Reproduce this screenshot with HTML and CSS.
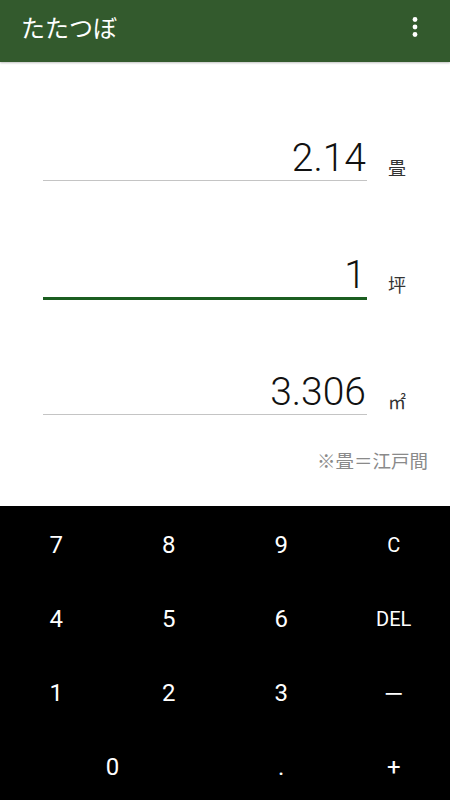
FILE: index.html
```html
<!DOCTYPE html>
<html lang="ja">
    <head>
    <meta charset="utf-8">
    <title>たたつぼ</title>
    <link rel="stylesheet" href="styles.css">
    </head>
    <body>
        <header class="toolbar">
            <h1 class="title">たたつぼ</h1>
            <svg class="menu" width="24" height="24" viewBox="0 0 24 24">
                <circle cx="12" cy="4.5" r="2.4" fill="#fff"/>
                <circle cx="12" cy="12" r="2.4" fill="#fff"/>
                <circle cx="12" cy="19.5" r="2.4" fill="#fff"/>
            </svg>
        </header>

        <main class="fields">
            <div class="field">
                <div class="entry">2.14</div>
                <span class="unit">畳</span>
            </div>
            <div class="field">
                <div class="entry focused">1</div>
                <span class="unit">坪</span>
            </div>
            <div class="field">
                <div class="entry">3.306</div>
                <span class="unit">㎡</span>
            </div>
            <p class="note">※畳＝江戸間</p>
        </main>

        <!-- keypad -->
        <div class="keypad">
            <button type="button" class="key">7</button>
            <button type="button" class="key">8</button>
            <button type="button" class="key">9</button>
            <button type="button" class="key small">C</button>
            <button type="button" class="key">4</button>
            <button type="button" class="key">5</button>
            <button type="button" class="key">6</button>
            <button type="button" class="key small">DEL</button>
            <button type="button" class="key">1</button>
            <button type="button" class="key">2</button>
            <button type="button" class="key">3</button>
            <button type="button" class="key minus">ー</button>
            <button type="button" class="key wide">0</button>
            <button type="button" class="key">.</button>
            <button type="button" class="key">+</button>
        </div>
    </body>
</html>
```

FILE: styles.css
```css
html, body {
    margin: 0;
    height: 800px;
    overflow: hidden;
}

body {
    display: flex;
    flex-direction: column;
    background: #fff;
    font-family: Roboto, "Noto Sans CJK JP", sans-serif;
}

.toolbar {
    flex: none;
    height: 62px;
    box-sizing: border-box;
    padding: 0 23px 8px 21px;
    display: flex;
    align-items: center;
    justify-content: space-between;
    background: #335a2d;
    box-shadow: 0 1px 2px rgba(0,0,0,0.25);
    position: relative;
    z-index: 1;
}

.title {
    margin: 0;
    font-family: "Noto Sans CJK JP", sans-serif;
    font-size: 24px;
    font-weight: 400;
    line-height: 32px;
    color: #fff;
}

.fields {
    flex: 1;
    padding: 74px 0 0 43px;
    display: flex;
    flex-direction: column;
    gap: 70px;
}

.field {
    display: flex;
    align-items: flex-start;
}

.entry {
    width: 323px;
    padding-right: 1px;
    font-size: 39px;
    font-weight: 300;
    line-height: 44px;
    color: #111;
    text-align: right;
    border-bottom: 1px solid #c4c4c4;
    margin-bottom: 2px;
}

.entry.focused {
    border-bottom: 3px solid #1b5e20;
    margin-bottom: 0;
}

.unit {
    margin: 21px 0 0 21px;
    font-family: "Noto Sans CJK JP", sans-serif;
    font-size: 18px;
    line-height: 20px;
    color: #333;
}

.note {
    margin: -39px 22px 0 0;
    font-family: "Noto Sans CJK JP", sans-serif;
    font-size: 18.5px;
    line-height: 24px;
    color: #8a8a8a;
    text-align: right;
}

.keypad {
    flex: none;
    height: 294px;
    box-sizing: border-box;
    padding-top: 2px;
    overflow: hidden;
    background: #000;
    display: grid;
    grid-template-columns: repeat(4, 1fr);
    grid-auto-rows: 74px;
}

.key {
    background: none;
    border: none;
    padding: 0;
    color: #fff;
    font-family: Roboto, sans-serif;
    font-size: 24px;
    display: flex;
    align-items: center;
    justify-content: center;
}

.key.small {
    font-size: 20px;
}

.key.minus {
    font-family: "Noto Sans CJK JP", sans-serif;
    font-size: 20px;
}

.key.wide {
    grid-column: span 2;
}
```
